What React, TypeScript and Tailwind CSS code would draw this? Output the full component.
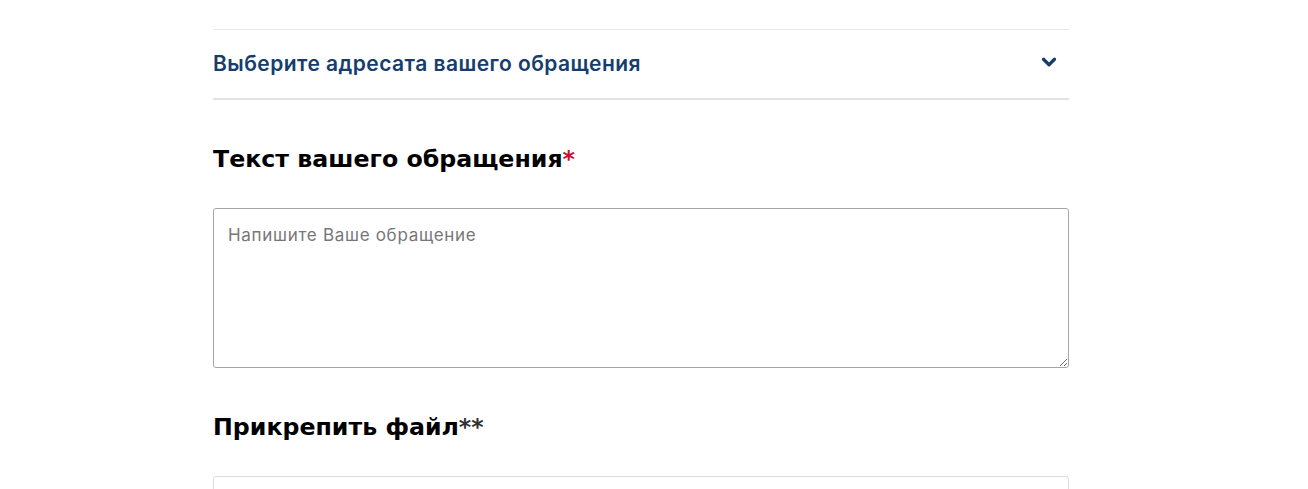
import { ChevronDown } from "lucide-react";

export default function App() {
  return (
    <div className="min-h-screen bg-white font-['Inter','Noto_Sans',sans-serif]">
      <div className="ml-[213px] w-[856px] pt-[29px]">
        <div className="flex h-[71px] items-center justify-between border-t border-b-2 border-t-[#e8e8e8] border-b-[#e2e2e2]">
          <span className="text-[21px] font-semibold tracking-[0.45px] text-[#163d6c]">
            Выберите адресата вашего обращения
          </span>
          <ChevronDown className="mr-[9px] -mt-[4px] size-[22px] text-[#163d6c]" strokeWidth={3.5} />
        </div>

        <h2 className="mt-[44px] font-['DejaVu_Sans',sans-serif] text-[23.7px] font-bold leading-[30px] text-black">
          Текст вашего обращения<span className="text-[#c8102e]">*</span>
        </h2>

        <textarea
          placeholder="Напишите Ваше обращение"
          className="mt-[34px] block h-[160px] w-full resize-y rounded-[3px] border border-[#a6a6a6] px-[14px] py-[14px] text-[17px] tracking-[0.7px] text-black placeholder:text-[#777]"
        />

        <h2 className="mt-[44px] font-['DejaVu_Sans',sans-serif] text-[23.7px] font-bold leading-[30px] text-black">
          Прикрепить файл<span className="text-[#333]">**</span>
        </h2>

        <div className="mt-[34px] h-[60px] rounded-t-[3px] border border-[#dcdcdc]" />
      </div>
    </div>
  );
}
